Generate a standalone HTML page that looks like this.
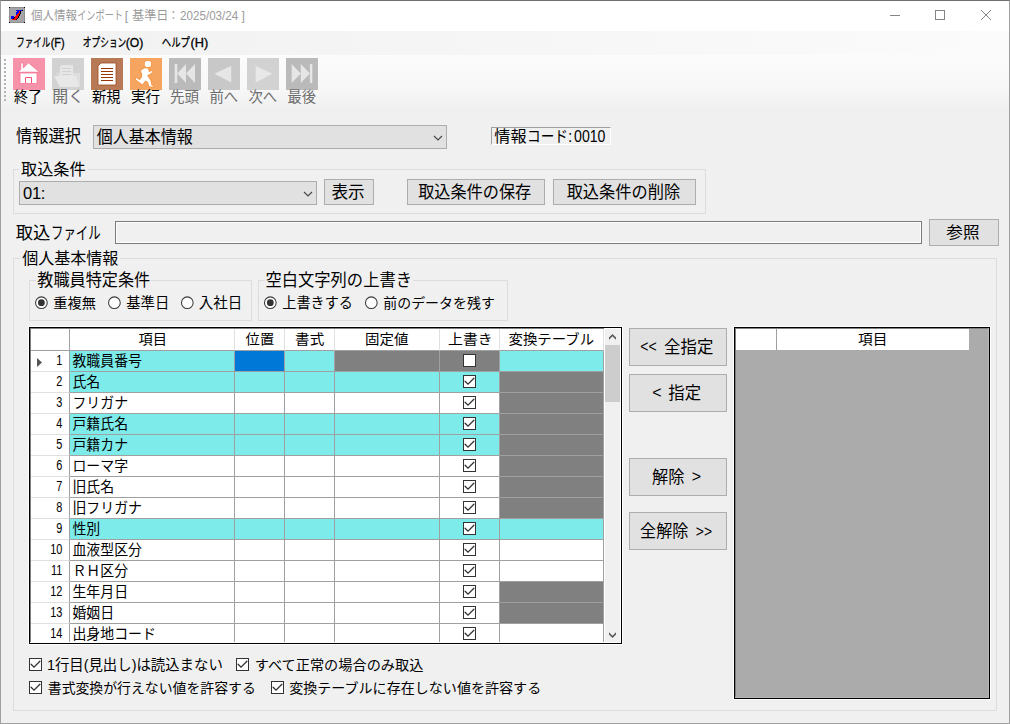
<!DOCTYPE html>
<html lang="ja"><head><meta charset="utf-8"><title>個人情報インポート</title>
<style>
html,body{margin:0;padding:0;background:#f0f0f0;}
body{width:1010px;height:724px;overflow:hidden;font-family:"Liberation Sans","Noto Sans CJK JP",sans-serif;font-size:14px;color:#000;}
#win{position:relative;width:1010px;height:724px;background:#f0f0f0;overflow:hidden;}
#win div,#win span.t,#win svg.i{position:absolute;box-sizing:border-box;}
.t{display:block;overflow:visible;}
.t svg{position:absolute;left:0;top:0;display:block;overflow:visible;}
.t text{font-family:"Liberation Sans","Noto Sans CJK JP",sans-serif;}
.titlebar{background:#fff;}
.menubar{background:linear-gradient(90deg,#f1f1f1 0%,#f6f6f6 50%,#fbfbfb 100%);}
.toolbar{background:linear-gradient(#fcfcfc 0%,#f8f8f8 60%,#f0f0f0 100%);}
.btn{background:#e1e1e1;border:1px solid #adadad;}
.combo{background:#e1e1e1;border:1px solid #adadad;}
.grp{border:1px solid #dcdcdc;}
.txt{background:#f0f0f0;border:1px solid #7a7a7a;box-shadow:inset 0 0 0 1px #fff;}
.sunk{border:1px solid;border-color:#a0a0a0 #fff #fff #a0a0a0;}
.grid{background:#fff;border:1px solid #000;overflow:hidden;}
.cell{border-right:1px solid #a0a0a0;border-bottom:1px solid #a0a0a0;}
.cy{background:#7eebeb;}.gy{background:#808080;}.wh{background:#fff;}.bl{background:#0078d7;}
.hd{background:#fff;border-right:1px solid #e0e0e0;border-bottom:1px solid #a0a0a0;}
.rh{background:#fff;border-right:1px solid #a0a0a0;border-bottom:1px solid #e0e0e0;}
.num{text-align:right;font-size:14px;line-height:20px;transform:scaleX(.78);transform-origin:100% 50%;}
.cb{background:#fff;border:1px solid #333;}
.rad{background:#fff;border:1px solid #333;border-radius:50%;}
.dot{background:#222;border-radius:50%;}
</style></head>
<body>
<div id="win">
<section class="chrome" aria-label="window title and menu">
<div class="titlebar" style="left:1px;top:1px;width:1008px;height:30px;"></div>
<div class="menubar" style="left:1px;top:31px;width:1008px;height:24px;"></div>
<div class="toolbar" style="left:1px;top:55px;width:1008px;height:53px;"></div>
<svg class="i" style="left:9px;top:7px" width="16" height="16" viewBox="0 0 16 16" shape-rendering="crispEdges"><rect width="16" height="16" fill="#8e8e8e"/><rect x="1" y="1" width="14" height="14" fill="#a4a4a8"/><path d="M0 0h1v1h-1zM15 0h1v1h-1zM0 15h1v1h-1zM15 15h1v1h-1z" fill="#000"/><rect x="7" y="3" width="6" height="1" fill="#0000ff"/><rect x="13" y="3" width="1" height="1" fill="#000"/><rect x="8" y="4" width="2" height="1" fill="#0000ff"/><rect x="10" y="4" width="1" height="1" fill="#ff0000"/><rect x="11" y="4" width="1" height="1" fill="#000"/><rect x="7" y="5" width="3" height="1" fill="#0000ff"/><rect x="10" y="5" width="1" height="1" fill="#ff0000"/><rect x="11" y="5" width="1" height="1" fill="#000"/><rect x="7" y="6" width="2" height="1" fill="#0000ff"/><rect x="9" y="6" width="2" height="1" fill="#ff0000"/><rect x="11" y="6" width="1" height="1" fill="#000"/><rect x="7" y="7" width="1" height="1" fill="#0000ff"/><rect x="8" y="7" width="2" height="1" fill="#ff0000"/><rect x="10" y="7" width="1" height="1" fill="#000"/><rect x="7" y="8" width="3" height="1" fill="#ff0000"/><rect x="10" y="8" width="1" height="1" fill="#000"/><rect x="2" y="9" width="3" height="1" fill="#0000ff"/><rect x="6" y="9" width="3" height="1" fill="#ff0000"/><rect x="9" y="9" width="1" height="1" fill="#000"/><rect x="2" y="10" width="3" height="1" fill="#0000ff"/><rect x="5" y="10" width="1" height="1" fill="#000"/><rect x="6" y="10" width="3" height="1" fill="#ff0000"/><rect x="9" y="10" width="1" height="1" fill="#000"/><rect x="2" y="11" width="2" height="1" fill="#0000ff"/><rect x="4" y="11" width="1" height="1" fill="#000"/><rect x="5" y="11" width="3" height="1" fill="#ff0000"/><rect x="8" y="11" width="1" height="1" fill="#000"/><rect x="3" y="12" width="4" height="1" fill="#ff0000"/><rect x="7" y="12" width="1" height="1" fill="#000"/></svg>
<span class="t" style="left:29px;top:8px;width:50px;height:16px"><svg width="50" height="16"><text x="2" y="12.2" font-size="12.15" fill="#9a9a9a" textLength="46" lengthAdjust="spacingAndGlyphs">個人情報</text></svg></span>
<span class="t" style="left:76px;top:7px;width:48px;height:16px"><svg width="48" height="16"><text x="1.21" y="13.2" font-size="12.15" fill="#9a9a9a" textLength="45.8" lengthAdjust="spacingAndGlyphs">インポート</text></svg></span>
<span class="t" style="left:123px;top:8px;width:8px;height:17px"><svg width="8" height="17"><text x="1.72" y="12.2" font-size="12.15" fill="#9a9a9a">[</text></svg></span>
<span class="t" style="left:130px;top:7px;width:39px;height:17px"><svg width="39" height="17"><text x="2.06" y="13.2" font-size="12.15" fill="#9a9a9a" textLength="36.4" lengthAdjust="spacingAndGlyphs">基準日</text></svg></span>
<span class="t" style="left:170px;top:9px;width:7px;height:13px"><svg width="7" height="13"><text x="-2.14" y="11.2" font-size="12.15" fill="#9a9a9a" textLength="11.2" lengthAdjust="spacingAndGlyphs">：</text></svg></span>
<span class="t" style="left:178px;top:8px;width:62px;height:17px"><svg width="62" height="17"><text x="2.05" y="12.2" font-size="12.15" fill="#9a9a9a" textLength="58.2" lengthAdjust="spacingAndGlyphs">2025/03/24</text></svg></span>
<span class="t" style="left:239px;top:8px;width:8px;height:17px"><svg width="8" height="17"><text x="2.42" y="12.2" font-size="12.15" fill="#9a9a9a">]</text></svg></span>
<svg class="i" style="left:880px;top:1px" width="128" height="30" viewBox="880 1 128 30" fill="none" stroke="#858585" stroke-width="1"><path d="M890 15.5h10"/><rect x="935.5" y="10.5" width="9" height="9"/><path d="M981 10l10 10M991 10l-10 10"/></svg>
<span class="t" style="left:15px;top:35px;width:37px;height:15px"><svg width="37" height="15"><text x="1.27" y="11.96" font-size="11.95" fill="#000" stroke="#000" stroke-width="0.3" textLength="34" lengthAdjust="spacingAndGlyphs">ファイル</text></svg></span>
<span class="t" style="left:49px;top:35px;width:17px;height:17px"><svg width="17" height="17"><text x="1.76" y="11.96" font-size="11.95" fill="#000" stroke="#000" stroke-width="0.3" textLength="13.9" lengthAdjust="spacingAndGlyphs">(F)</text></svg></span>
<span class="t" style="left:81px;top:35px;width:47px;height:15px"><svg width="47" height="15"><text x="1.85" y="11.96" font-size="11.95" fill="#000" stroke="#000" stroke-width="0.3" textLength="43.4" lengthAdjust="spacingAndGlyphs">オプション</text></svg></span>
<span class="t" style="left:124px;top:35px;width:21px;height:17px"><svg width="21" height="17"><text x="1.76" y="11.96" font-size="11.95" fill="#000" stroke="#000" stroke-width="0.3" textLength="17.6" lengthAdjust="spacingAndGlyphs">(O)</text></svg></span>
<span class="t" style="left:160px;top:35px;width:32px;height:15px"><svg width="32" height="15"><text x="1.82" y="11.96" font-size="11.95" fill="#000" stroke="#000" stroke-width="0.3" textLength="28.2" lengthAdjust="spacingAndGlyphs">ヘルプ</text></svg></span>
<span class="t" style="left:189px;top:35px;width:21px;height:17px"><svg width="21" height="17"><text x="1.54" y="11.96" font-size="11.95" fill="#000" stroke="#000" stroke-width="0.3" textLength="17.7" lengthAdjust="spacingAndGlyphs">(H)</text></svg></span>
</section>
<section class="tools" aria-label="toolbar">
<div class="" style="left:4px;top:59px;width:2px;height:2px;background:#b4b4b4"></div>
<div class="" style="left:4px;top:63px;width:2px;height:2px;background:#b4b4b4"></div>
<div class="" style="left:4px;top:67px;width:2px;height:2px;background:#b4b4b4"></div>
<div class="" style="left:4px;top:71px;width:2px;height:2px;background:#b4b4b4"></div>
<div class="" style="left:4px;top:75px;width:2px;height:2px;background:#b4b4b4"></div>
<div class="" style="left:4px;top:79px;width:2px;height:2px;background:#b4b4b4"></div>
<div class="" style="left:4px;top:83px;width:2px;height:2px;background:#b4b4b4"></div>
<div class="" style="left:4px;top:87px;width:2px;height:2px;background:#b4b4b4"></div>
<div class="" style="left:4px;top:91px;width:2px;height:2px;background:#b4b4b4"></div>
<div class="" style="left:4px;top:95px;width:2px;height:2px;background:#b4b4b4"></div>
<div class="" style="left:4px;top:99px;width:2px;height:2px;background:#b4b4b4"></div>
<svg class="i" style="left:13px;top:58px" width="32" height="32" viewBox="0 0 32 32"><rect width="32" height="32" fill="#f792ab"/><g fill="#fff" stroke="#f4668a" stroke-width=".7"><path d="M7.7 4.8h2.6v5.2l5.2-5.2 11 9.4h-21.8l3-2.6z"/><path d="M7 15h17v10.5h-17z"/><path d="M12.5 25v-5.5h6v5.5" fill="#fff" stroke="#f4507a" stroke-width="1"/></g></svg>
<svg class="i" style="left:52px;top:58px" width="32" height="32" viewBox="0 0 32 32"><rect width="32" height="32" fill="#d2d2d2"/><path d="M5 15h23v13h-20z" fill="#dedede"/><path d="M8 9l2-2h11v13h-13z" fill="#e6e6e6"/><path d="M10 10.5h9M10 13.5h9M10 16.5h9" stroke="#d2d2d2" stroke-width="1"/><path d="M2 18h22l3.3 11h-19.3z" fill="#e8e8e8"/></svg>
<svg class="i" style="left:91px;top:58px" width="32" height="32" viewBox="0 0 32 32"><rect width="32" height="32" fill="#b87a56"/><path d="M7 8l3-3h15v22h-18z" fill="#fff" stroke="#a04a1e" stroke-width=".8"/><path d="M10 10.5h12M10 13.5h12M10 16.5h12M10 19.5h12M10 22.5h12" stroke="#9a3306" stroke-width="1"/></svg>
<svg class="i" style="left:130px;top:58px" width="32" height="32" viewBox="0 0 32 32"><rect width="32" height="32" fill="#f5a55f"/><g fill="#fff" stroke="#f3913c" stroke-width="1.4" paint-order="stroke" stroke-linejoin="round"><circle cx="17.9" cy="6" r="3.3"/><path d="M14.4 10.2L17.9 10.4 18.9 13.9 21.9 12.9 22.4 13.9 19.9 15.9 17.1 17.6 20.6 22.4 21.4 27.3 22.9 28.1 22.9 29.1 19.4 28.3 17.9 23.9 15.4 22.4 12.4 26.6 5.7 21.4 6.2 20.1 9.7 22.1 11.7 19.9 12.2 15.2 11.2 14.4 11.2 12.2z"/></g></svg>
<svg class="i" style="left:169px;top:58px" width="32" height="32" viewBox="0 0 32 32"><rect width="32" height="32" fill="#bababa"/><path d="M5.7 6h2.6v19h-2.6zM8.3 15.5L17 6v19zM17 15.5L26 6v19z" fill="#e6e6e6"/></svg>
<svg class="i" style="left:208px;top:58px" width="32" height="32" viewBox="0 0 32 32"><rect width="32" height="32" fill="#c8c8c8"/><path d="M6.5 15.8L23.2 7.7v16.8z" fill="#e6e6e6"/></svg>
<svg class="i" style="left:247px;top:58px" width="32" height="32" viewBox="0 0 32 32"><rect width="32" height="32" fill="#d2d2d2"/><path d="M25.3 15.8L8.7 7.7v16.8z" fill="#e8e8e8"/></svg>
<svg class="i" style="left:286px;top:58px" width="32" height="32" viewBox="0 0 32 32"><rect width="32" height="32" fill="#bababa"/><path d="M23.9 6h2.4v19h-2.4zM23.9 15.5L14.8 6v19zM14.8 15.5L5.7 6v19z" fill="#e6e6e6"/></svg>
<span class="t" style="left:12px;top:87px;width:30px;height:19px"><svg width="30" height="19"><text x="2.09" y="15.07" font-size="14.7" fill="#000" textLength="27.9" lengthAdjust="spacingAndGlyphs">終了</text></svg></span>
<span class="t" style="left:51px;top:87px;width:29px;height:19px"><svg width="29" height="19"><text x="1.39" y="15.01" font-size="15.6" fill="#6e6e6e" textLength="31.8" lengthAdjust="spacingAndGlyphs">開く</text></svg></span>
<span class="t" style="left:90px;top:87px;width:33px;height:19px"><svg width="33" height="19"><text x="2" y="14.83" font-size="14.5" fill="#000" textLength="28.7" lengthAdjust="spacingAndGlyphs">新規</text></svg></span>
<span class="t" style="left:129px;top:87px;width:33px;height:19px"><svg width="33" height="19"><text x="2.02" y="15.02" font-size="14.7" fill="#000" textLength="29.2" lengthAdjust="spacingAndGlyphs">実行</text></svg></span>
<span class="t" style="left:168px;top:87px;width:33px;height:19px"><svg width="33" height="19"><text x="1.9" y="14.99" font-size="14.7" fill="#6e6e6e" textLength="29.1" lengthAdjust="spacingAndGlyphs">先頭</text></svg></span>
<span class="t" style="left:208px;top:87px;width:32px;height:19px"><svg width="32" height="19"><text x="1.49" y="15.07" font-size="14.8" fill="#6e6e6e" textLength="28.7" lengthAdjust="spacingAndGlyphs">前へ</text></svg></span>
<span class="t" style="left:247px;top:87px;width:32px;height:19px"><svg width="32" height="19"><text x="1.47" y="14.96" font-size="15" fill="#6e6e6e" textLength="28.8" lengthAdjust="spacingAndGlyphs">次へ</text></svg></span>
<span class="t" style="left:286px;top:87px;width:31px;height:19px"><svg width="31" height="19"><text x="1.45" y="14.83" font-size="15.2" fill="#6e6e6e" textLength="28.4" lengthAdjust="spacingAndGlyphs">最後</text></svg></span>
</section>
<section class="form-top" aria-label="import settings">
<span class="t" style="left:14px;top:125px;width:69px;height:21px"><svg width="69" height="21"><text x="1.98" y="16.87" font-size="17.2" fill="#000" textLength="65" lengthAdjust="spacingAndGlyphs">情報選択</text></svg></span>
<div class="combo" style="left:93px;top:125px;width:354px;height:24px;"></div>
<span class="t" style="left:95px;top:126px;width:100px;height:21px"><svg width="100" height="21"><text x="1.83" y="16.79" font-size="16.9" fill="#000" textLength="95.8" lengthAdjust="spacingAndGlyphs">個人基本情報</text></svg></span>
<svg class="i" style="left:432px;top:134px" width="12" height="8" viewBox="0 0 12 8"><path d="M2 2l4 4 4-4" fill="none" stroke="#444" stroke-width="1.1"/></svg>
<div class="sunk" style="left:491px;top:127px;width:120px;height:18px;"></div>
<span class="t" style="left:493px;top:126px;width:36px;height:20px"><svg width="36" height="20"><text x="1.38" y="15.79" font-size="15.6" fill="#000" textLength="32.3" lengthAdjust="spacingAndGlyphs">情報</text></svg></span>
<span class="t" style="left:526px;top:127px;width:43px;height:18px"><svg width="43" height="18"><text x="1.05" y="14.79" font-size="15.6" fill="#000" textLength="41" lengthAdjust="spacingAndGlyphs">コード</text></svg></span>
<span class="t" style="left:567px;top:131px;width:7px;height:13px"><svg width="7" height="13"><text x="1.09" y="10.79" font-size="15.6" fill="#000">:</text></svg></span>
<span class="t" style="left:572px;top:128px;width:35px;height:16px"><svg width="35" height="16"><text x="2.04" y="13.79" font-size="15.6" fill="#000" textLength="31.4" lengthAdjust="spacingAndGlyphs">0010</text></svg></span>
<div class="grp" style="left:13px;top:169px;width:693px;height:45px;"></div>
<div class="" style="left:19px;top:160px;width:69px;height:18px;background:#f0f0f0"></div>
<span class="t" style="left:19px;top:159px;width:68px;height:20px"><svg width="68" height="20"><text x="2.06" y="15.82" font-size="16.2" fill="#000" textLength="64.6" lengthAdjust="spacingAndGlyphs">取込条件</text></svg></span>
<div class="combo" style="left:19px;top:181px;width:298px;height:24px;"><span style="position:absolute;left:3px;top:2px;font-size:16.5px;line-height:19px;letter-spacing:-.3px">01:</span></div>
<svg class="i" style="left:302px;top:190px" width="12" height="8" viewBox="0 0 12 8"><path d="M2 2l4 4 4-4" fill="none" stroke="#444" stroke-width="1.1"/></svg>
<div class="btn" style="left:324px;top:179px;width:50px;height:26px;"></div>
<span class="t" style="left:330px;top:181px;width:36px;height:21px"><svg width="36" height="21"><text x="1.43" y="17.01" font-size="17.1" fill="#000" textLength="33.3" lengthAdjust="spacingAndGlyphs">表示</text></svg></span>
<div class="btn" style="left:407px;top:179px;width:138px;height:26px;"></div>
<span class="t" style="left:417px;top:181px;width:116px;height:21px"><svg width="116" height="21"><text x="1.15" y="16.86" font-size="16.9" fill="#000" textLength="113.1" lengthAdjust="spacingAndGlyphs">取込条件の保存</text></svg></span>
<div class="btn" style="left:553px;top:179px;width:143px;height:26px;"></div>
<span class="t" style="left:565px;top:181px;width:117px;height:21px"><svg width="117" height="21"><text x="1.65" y="16.86" font-size="16.9" fill="#000" textLength="113.5" lengthAdjust="spacingAndGlyphs">取込条件の削除</text></svg></span>
<span class="t" style="left:14px;top:223px;width:38px;height:20px"><svg width="38" height="20"><text x="1.79" y="16.24" font-size="17.2" fill="#000" textLength="34.7" lengthAdjust="spacingAndGlyphs">取込</text></svg></span>
<span class="t" style="left:50px;top:224px;width:53px;height:18px"><svg width="53" height="18"><text x="0.97" y="15.24" font-size="17.2" fill="#000" textLength="49.8" lengthAdjust="spacingAndGlyphs">ファイル</text></svg></span>
<div class="txt" style="left:115px;top:221px;width:807px;height:23px;"></div>
<div class="btn" style="left:929px;top:219px;width:70px;height:27px;"></div>
<span class="t" style="left:945px;top:222px;width:36px;height:20px"><svg width="36" height="20"><text x="1.32" y="15.83" font-size="16" fill="#000" textLength="33.2" lengthAdjust="spacingAndGlyphs">参照</text></svg></span>
</section>
<section class="options" aria-label="group options">
<div class="grp" style="left:13px;top:258px;width:984px;height:453px;"></div>
<div class="" style="left:20px;top:249px;width:100px;height:18px;background:#f0f0f0"></div>
<span class="t" style="left:20px;top:248px;width:100px;height:20px"><svg width="100" height="20"><text x="2.13" y="16.33" font-size="16.4" fill="#000" textLength="96.2" lengthAdjust="spacingAndGlyphs">個人基本情報</text></svg></span>
<div class="grp" style="left:29px;top:280px;width:223px;height:41px;"></div>
<div class="" style="left:36px;top:271px;width:115px;height:18px;background:#f0f0f0"></div>
<span class="t" style="left:35px;top:270px;width:117px;height:20px"><svg width="117" height="20"><text x="2.26" y="16.16" font-size="17" fill="#000" textLength="112.9" lengthAdjust="spacingAndGlyphs">教職員特定条件</text></svg></span>
<div class="grp" style="left:258px;top:280px;width:250px;height:41px;"></div>
<div class="" style="left:265px;top:271px;width:148px;height:18px;background:#f0f0f0"></div>
<span class="t" style="left:264px;top:270px;width:149px;height:20px"><svg width="149" height="20"><text x="1.54" y="16.17" font-size="17.1" fill="#000" textLength="146.4" lengthAdjust="spacingAndGlyphs">空白文字列の上書き</text></svg></span>
<svg class="i" style="left:34px;top:295px" width="15" height="15" viewBox="0 0 15 15"><circle cx="7.4" cy="7.7" r="5.85" fill="#fff" stroke="#3a3a3a" stroke-width="1.05"/><circle cx="7.4" cy="7.7" r="3.4" fill="#333"/></svg>
<span class="t" style="left:52px;top:294px;width:46px;height:18px"><svg width="46" height="18"><text x="1.35" y="14.05" font-size="14.2" fill="#000" textLength="42.6" lengthAdjust="spacingAndGlyphs">重複無</text></svg></span>
<svg class="i" style="left:107px;top:295px" width="15" height="15" viewBox="0 0 15 15"><circle cx="7.4" cy="7.7" r="5.85" fill="#fff" stroke="#3a3a3a" stroke-width="1.05"/></svg>
<span class="t" style="left:124px;top:294px;width:45px;height:18px"><svg width="45" height="18"><text x="2.22" y="14.2" font-size="14.3" fill="#000" textLength="43" lengthAdjust="spacingAndGlyphs">基準日</text></svg></span>
<svg class="i" style="left:180px;top:295px" width="15" height="15" viewBox="0 0 15 15"><circle cx="7.3" cy="7.7" r="5.85" fill="#fff" stroke="#3a3a3a" stroke-width="1.05"/></svg>
<span class="t" style="left:197px;top:294px;width:45px;height:18px"><svg width="45" height="18"><text x="1.78" y="14.19" font-size="14.5" fill="#000" textLength="43.5" lengthAdjust="spacingAndGlyphs">入社日</text></svg></span>
<svg class="i" style="left:263px;top:295px" width="15" height="15" viewBox="0 0 15 15"><circle cx="7.3" cy="7.7" r="5.85" fill="#fff" stroke="#3a3a3a" stroke-width="1.05"/><circle cx="7.3" cy="7.7" r="3.4" fill="#333"/></svg>
<span class="t" style="left:281px;top:294px;width:73px;height:18px"><svg width="73" height="18"><text x="1.36" y="14.14" font-size="14.3" fill="#000" textLength="70.5" lengthAdjust="spacingAndGlyphs">上書きする</text></svg></span>
<svg class="i" style="left:364px;top:295px" width="15" height="15" viewBox="0 0 15 15"><circle cx="7.3" cy="7.7" r="5.85" fill="#fff" stroke="#3a3a3a" stroke-width="1.05"/></svg>
<span class="t" style="left:382px;top:294px;width:115px;height:18px"><svg width="115" height="18"><text x="1.25" y="14.06" font-size="14" fill="#000" textLength="111.6" lengthAdjust="spacingAndGlyphs">前のデータを残す</text></svg></span>
</section>
<section class="grid-left" aria-label="item grid">
<div class="" style="left:28px;top:326px;width:595px;height:319px;border:1px solid #fff"></div>
<div class="grid" style="left:29px;top:327px;width:593px;height:317px;"></div>
<div class="hd" style="left:31px;top:329px;width:39px;height:22px;border-right-color:#a0a0a0"></div>
<div class="hd" style="left:70px;top:329px;width:165px;height:22px;"></div>
<div class="hd" style="left:235px;top:329px;width:50px;height:22px;"></div>
<div class="hd" style="left:285px;top:329px;width:50px;height:22px;"></div>
<div class="hd" style="left:335px;top:329px;width:105px;height:22px;"></div>
<div class="hd" style="left:440px;top:329px;width:60px;height:22px;"></div>
<div class="hd" style="left:500px;top:329px;width:104px;height:22px;"></div>
<span class="t" style="left:137px;top:330px;width:30px;height:17px"><svg width="30" height="17"><text x="1.64" y="13.66" font-size="14" fill="#000" textLength="28.5" lengthAdjust="spacingAndGlyphs">項目</text></svg></span>
<span class="t" style="left:244px;top:330px;width:32px;height:17px"><svg width="32" height="17"><text x="1.64" y="13.66" font-size="14" fill="#000" textLength="28.6" lengthAdjust="spacingAndGlyphs">位置</text></svg></span>
<span class="t" style="left:293px;top:330px;width:33px;height:17px"><svg width="33" height="17"><text x="2.08" y="13.66" font-size="14" fill="#000" textLength="29.1" lengthAdjust="spacingAndGlyphs">書式</text></svg></span>
<span class="t" style="left:364px;top:330px;width:46px;height:17px"><svg width="46" height="17"><text x="1.08" y="13.66" font-size="14" fill="#000" textLength="43.4" lengthAdjust="spacingAndGlyphs">固定値</text></svg></span>
<span class="t" style="left:447px;top:330px;width:46px;height:17px"><svg width="46" height="17"><text x="1.09" y="13.66" font-size="14" fill="#000" textLength="44.6" lengthAdjust="spacingAndGlyphs">上書き</text></svg></span>
<span class="t" style="left:507px;top:329px;width:89px;height:18px"><svg width="89" height="18"><text x="1.54" y="14.66" font-size="14" fill="#000" textLength="85.6" lengthAdjust="spacingAndGlyphs">変換テーブル</text></svg></span>
<div class="rh" style="left:31px;top:351px;width:39px;height:21px;"><div class="num" style="left:0;top:-1px;width:31.3px;height:20px">1</div></div>
<div class="cell cy" style="left:70px;top:351px;width:165px;height:21px;"></div>
<div class="cell bl" style="left:235px;top:351px;width:50px;height:21px;"></div>
<div class="cell cy" style="left:285px;top:351px;width:50px;height:21px;"></div>
<div class="cell gy" style="left:335px;top:351px;width:105px;height:21px;"></div>
<div class="cell gy" style="left:440px;top:351px;width:60px;height:21px;"></div>
<div class="cell cy" style="left:500px;top:351px;width:104px;height:21px;"></div>
<span class="t" style="left:70px;top:351px;width:74px;height:18px"><svg width="74" height="18"><text x="2.44" y="14.77" font-size="14.4" fill="#000" textLength="69.6" lengthAdjust="spacingAndGlyphs">教職員番号</text></svg></span>
<div class="cb" style="left:463px;top:354px;width:13px;height:13px;"></div>
<div class="rh" style="left:31px;top:372px;width:39px;height:21px;"><div class="num" style="left:0;top:-1px;width:31.3px;height:20px">2</div></div>
<div class="cell cy" style="left:70px;top:372px;width:165px;height:21px;"></div>
<div class="cell cy" style="left:235px;top:372px;width:50px;height:21px;"></div>
<div class="cell cy" style="left:285px;top:372px;width:50px;height:21px;"></div>
<div class="cell cy" style="left:335px;top:372px;width:105px;height:21px;"></div>
<div class="cell cy" style="left:440px;top:372px;width:60px;height:21px;"></div>
<div class="cell gy" style="left:500px;top:372px;width:104px;height:21px;"></div>
<span class="t" style="left:71px;top:372px;width:30px;height:18px"><svg width="30" height="18"><text x="1.44" y="14.77" font-size="14.4" fill="#000" textLength="27.8" lengthAdjust="spacingAndGlyphs">氏名</text></svg></span>
<div class="cb" style="left:463px;top:375px;width:13px;height:13px;"><svg width="11" height="11" viewBox="0 0 11 11" style="position:absolute;left:0;top:0"><path d="M1.1 5.3L4 8.2 9.9 2.3" fill="none" stroke="#333" stroke-width="1.3" stroke-linecap="round"/></svg></div>
<div class="rh" style="left:31px;top:393px;width:39px;height:21px;"><div class="num" style="left:0;top:-1px;width:31.3px;height:20px">3</div></div>
<div class="cell wh" style="left:70px;top:393px;width:165px;height:21px;"></div>
<div class="cell wh" style="left:235px;top:393px;width:50px;height:21px;"></div>
<div class="cell wh" style="left:285px;top:393px;width:50px;height:21px;"></div>
<div class="cell wh" style="left:335px;top:393px;width:105px;height:21px;"></div>
<div class="cell wh" style="left:440px;top:393px;width:60px;height:21px;"></div>
<div class="cell gy" style="left:500px;top:393px;width:104px;height:21px;"></div>
<span class="t" style="left:72px;top:393px;width:57px;height:18px"><svg width="57" height="18"><text x="0.44" y="14.77" font-size="14.4" fill="#000" textLength="55.6" lengthAdjust="spacingAndGlyphs">フリガナ</text></svg></span>
<div class="cb" style="left:463px;top:396px;width:13px;height:13px;"><svg width="11" height="11" viewBox="0 0 11 11" style="position:absolute;left:0;top:0"><path d="M1.1 5.3L4 8.2 9.9 2.3" fill="none" stroke="#333" stroke-width="1.3" stroke-linecap="round"/></svg></div>
<div class="rh" style="left:31px;top:414px;width:39px;height:21px;"><div class="num" style="left:0;top:-1px;width:31.3px;height:20px">4</div></div>
<div class="cell cy" style="left:70px;top:414px;width:165px;height:21px;"></div>
<div class="cell cy" style="left:235px;top:414px;width:50px;height:21px;"></div>
<div class="cell cy" style="left:285px;top:414px;width:50px;height:21px;"></div>
<div class="cell cy" style="left:335px;top:414px;width:105px;height:21px;"></div>
<div class="cell cy" style="left:440px;top:414px;width:60px;height:21px;"></div>
<div class="cell gy" style="left:500px;top:414px;width:104px;height:21px;"></div>
<span class="t" style="left:71px;top:414px;width:58px;height:18px"><svg width="58" height="18"><text x="1.44" y="14.77" font-size="14.4" fill="#000" textLength="55.6" lengthAdjust="spacingAndGlyphs">戸籍氏名</text></svg></span>
<div class="cb" style="left:463px;top:417px;width:13px;height:13px;"><svg width="11" height="11" viewBox="0 0 11 11" style="position:absolute;left:0;top:0"><path d="M1.1 5.3L4 8.2 9.9 2.3" fill="none" stroke="#333" stroke-width="1.3" stroke-linecap="round"/></svg></div>
<div class="rh" style="left:31px;top:435px;width:39px;height:21px;"><div class="num" style="left:0;top:-1px;width:31.3px;height:20px">5</div></div>
<div class="cell cy" style="left:70px;top:435px;width:165px;height:21px;"></div>
<div class="cell cy" style="left:235px;top:435px;width:50px;height:21px;"></div>
<div class="cell cy" style="left:285px;top:435px;width:50px;height:21px;"></div>
<div class="cell cy" style="left:335px;top:435px;width:105px;height:21px;"></div>
<div class="cell cy" style="left:440px;top:435px;width:60px;height:21px;"></div>
<div class="cell gy" style="left:500px;top:435px;width:104px;height:21px;"></div>
<span class="t" style="left:71px;top:435px;width:58px;height:18px"><svg width="58" height="18"><text x="1.44" y="14.77" font-size="14.4" fill="#000" textLength="55.6" lengthAdjust="spacingAndGlyphs">戸籍カナ</text></svg></span>
<div class="cb" style="left:463px;top:438px;width:13px;height:13px;"><svg width="11" height="11" viewBox="0 0 11 11" style="position:absolute;left:0;top:0"><path d="M1.1 5.3L4 8.2 9.9 2.3" fill="none" stroke="#333" stroke-width="1.3" stroke-linecap="round"/></svg></div>
<div class="rh" style="left:31px;top:456px;width:39px;height:21px;"><div class="num" style="left:0;top:-1px;width:31.3px;height:20px">6</div></div>
<div class="cell wh" style="left:70px;top:456px;width:165px;height:21px;"></div>
<div class="cell wh" style="left:235px;top:456px;width:50px;height:21px;"></div>
<div class="cell wh" style="left:285px;top:456px;width:50px;height:21px;"></div>
<div class="cell wh" style="left:335px;top:456px;width:105px;height:21px;"></div>
<div class="cell wh" style="left:440px;top:456px;width:60px;height:21px;"></div>
<div class="cell gy" style="left:500px;top:456px;width:104px;height:21px;"></div>
<span class="t" style="left:72px;top:456px;width:58px;height:18px"><svg width="58" height="18"><text x="0.44" y="14.77" font-size="14.4" fill="#000" textLength="55.6" lengthAdjust="spacingAndGlyphs">ローマ字</text></svg></span>
<div class="cb" style="left:463px;top:459px;width:13px;height:13px;"><svg width="11" height="11" viewBox="0 0 11 11" style="position:absolute;left:0;top:0"><path d="M1.1 5.3L4 8.2 9.9 2.3" fill="none" stroke="#333" stroke-width="1.3" stroke-linecap="round"/></svg></div>
<div class="rh" style="left:31px;top:477px;width:39px;height:21px;"><div class="num" style="left:0;top:-1px;width:31.3px;height:20px">7</div></div>
<div class="cell wh" style="left:70px;top:477px;width:165px;height:21px;"></div>
<div class="cell wh" style="left:235px;top:477px;width:50px;height:21px;"></div>
<div class="cell wh" style="left:285px;top:477px;width:50px;height:21px;"></div>
<div class="cell wh" style="left:335px;top:477px;width:105px;height:21px;"></div>
<div class="cell wh" style="left:440px;top:477px;width:60px;height:21px;"></div>
<div class="cell gy" style="left:500px;top:477px;width:104px;height:21px;"></div>
<span class="t" style="left:72px;top:477px;width:43px;height:18px"><svg width="43" height="18"><text x="0.44" y="14.77" font-size="14.4" fill="#000" textLength="41.7" lengthAdjust="spacingAndGlyphs">旧氏名</text></svg></span>
<div class="cb" style="left:463px;top:480px;width:13px;height:13px;"><svg width="11" height="11" viewBox="0 0 11 11" style="position:absolute;left:0;top:0"><path d="M1.1 5.3L4 8.2 9.9 2.3" fill="none" stroke="#333" stroke-width="1.3" stroke-linecap="round"/></svg></div>
<div class="rh" style="left:31px;top:498px;width:39px;height:21px;"><div class="num" style="left:0;top:-1px;width:31.3px;height:20px">8</div></div>
<div class="cell wh" style="left:70px;top:498px;width:165px;height:21px;"></div>
<div class="cell wh" style="left:235px;top:498px;width:50px;height:21px;"></div>
<div class="cell wh" style="left:285px;top:498px;width:50px;height:21px;"></div>
<div class="cell wh" style="left:335px;top:498px;width:105px;height:21px;"></div>
<div class="cell wh" style="left:440px;top:498px;width:60px;height:21px;"></div>
<div class="cell gy" style="left:500px;top:498px;width:104px;height:21px;"></div>
<span class="t" style="left:72px;top:498px;width:71px;height:18px"><svg width="71" height="18"><text x="0.44" y="14.77" font-size="14.4" fill="#000" textLength="69.6" lengthAdjust="spacingAndGlyphs">旧フリガナ</text></svg></span>
<div class="cb" style="left:463px;top:501px;width:13px;height:13px;"><svg width="11" height="11" viewBox="0 0 11 11" style="position:absolute;left:0;top:0"><path d="M1.1 5.3L4 8.2 9.9 2.3" fill="none" stroke="#333" stroke-width="1.3" stroke-linecap="round"/></svg></div>
<div class="rh" style="left:31px;top:519px;width:39px;height:21px;"><div class="num" style="left:0;top:-1px;width:31.3px;height:20px">9</div></div>
<div class="cell cy" style="left:70px;top:519px;width:165px;height:21px;"></div>
<div class="cell cy" style="left:235px;top:519px;width:50px;height:21px;"></div>
<div class="cell cy" style="left:285px;top:519px;width:50px;height:21px;"></div>
<div class="cell cy" style="left:335px;top:519px;width:105px;height:21px;"></div>
<div class="cell cy" style="left:440px;top:519px;width:60px;height:21px;"></div>
<div class="cell cy" style="left:500px;top:519px;width:104px;height:21px;"></div>
<span class="t" style="left:71px;top:519px;width:30px;height:18px"><svg width="30" height="18"><text x="1.44" y="14.77" font-size="14.4" fill="#000" textLength="27.8" lengthAdjust="spacingAndGlyphs">性別</text></svg></span>
<div class="cb" style="left:463px;top:522px;width:13px;height:13px;"><svg width="11" height="11" viewBox="0 0 11 11" style="position:absolute;left:0;top:0"><path d="M1.1 5.3L4 8.2 9.9 2.3" fill="none" stroke="#333" stroke-width="1.3" stroke-linecap="round"/></svg></div>
<div class="rh" style="left:31px;top:540px;width:39px;height:21px;"><div class="num" style="left:0;top:-1px;width:31.3px;height:20px">10</div></div>
<div class="cell wh" style="left:70px;top:540px;width:165px;height:21px;"></div>
<div class="cell wh" style="left:235px;top:540px;width:50px;height:21px;"></div>
<div class="cell wh" style="left:285px;top:540px;width:50px;height:21px;"></div>
<div class="cell wh" style="left:335px;top:540px;width:105px;height:21px;"></div>
<div class="cell wh" style="left:440px;top:540px;width:60px;height:21px;"></div>
<div class="cell wh" style="left:500px;top:540px;width:104px;height:21px;"></div>
<span class="t" style="left:70px;top:540px;width:74px;height:18px"><svg width="74" height="18"><text x="2.44" y="14.77" font-size="14.4" fill="#000" textLength="69.6" lengthAdjust="spacingAndGlyphs">血液型区分</text></svg></span>
<div class="cb" style="left:463px;top:543px;width:13px;height:13px;"><svg width="11" height="11" viewBox="0 0 11 11" style="position:absolute;left:0;top:0"><path d="M1.1 5.3L4 8.2 9.9 2.3" fill="none" stroke="#333" stroke-width="1.3" stroke-linecap="round"/></svg></div>
<div class="rh" style="left:31px;top:561px;width:39px;height:21px;"><div class="num" style="left:0;top:-1px;width:31.3px;height:20px">11</div></div>
<div class="cell wh" style="left:70px;top:561px;width:165px;height:21px;"></div>
<div class="cell wh" style="left:235px;top:561px;width:50px;height:21px;"></div>
<div class="cell wh" style="left:285px;top:561px;width:50px;height:21px;"></div>
<div class="cell wh" style="left:335px;top:561px;width:105px;height:21px;"></div>
<div class="cell wh" style="left:440px;top:561px;width:60px;height:21px;"></div>
<div class="cell wh" style="left:500px;top:561px;width:104px;height:21px;"></div>
<span class="t" style="left:73px;top:562px;width:57px;height:17px"><svg width="57" height="17"><text x="-0.56" y="13.77" font-size="14.4" fill="#000" textLength="55.6" lengthAdjust="spacingAndGlyphs">ＲＨ区分</text></svg></span>
<div class="cb" style="left:463px;top:564px;width:13px;height:13px;"><svg width="11" height="11" viewBox="0 0 11 11" style="position:absolute;left:0;top:0"><path d="M1.1 5.3L4 8.2 9.9 2.3" fill="none" stroke="#333" stroke-width="1.3" stroke-linecap="round"/></svg></div>
<div class="rh" style="left:31px;top:582px;width:39px;height:21px;"><div class="num" style="left:0;top:-1px;width:31.3px;height:20px">12</div></div>
<div class="cell wh" style="left:70px;top:582px;width:165px;height:21px;"></div>
<div class="cell wh" style="left:235px;top:582px;width:50px;height:21px;"></div>
<div class="cell wh" style="left:285px;top:582px;width:50px;height:21px;"></div>
<div class="cell wh" style="left:335px;top:582px;width:105px;height:21px;"></div>
<div class="cell wh" style="left:440px;top:582px;width:60px;height:21px;"></div>
<div class="cell gy" style="left:500px;top:582px;width:104px;height:21px;"></div>
<span class="t" style="left:71px;top:582px;width:57px;height:18px"><svg width="57" height="18"><text x="1.44" y="14.77" font-size="14.4" fill="#000" textLength="55.6" lengthAdjust="spacingAndGlyphs">生年月日</text></svg></span>
<div class="cb" style="left:463px;top:585px;width:13px;height:13px;"><svg width="11" height="11" viewBox="0 0 11 11" style="position:absolute;left:0;top:0"><path d="M1.1 5.3L4 8.2 9.9 2.3" fill="none" stroke="#333" stroke-width="1.3" stroke-linecap="round"/></svg></div>
<div class="rh" style="left:31px;top:603px;width:39px;height:21px;"><div class="num" style="left:0;top:-1px;width:31.3px;height:20px">13</div></div>
<div class="cell wh" style="left:70px;top:603px;width:165px;height:21px;"></div>
<div class="cell wh" style="left:235px;top:603px;width:50px;height:21px;"></div>
<div class="cell wh" style="left:285px;top:603px;width:50px;height:21px;"></div>
<div class="cell wh" style="left:335px;top:603px;width:105px;height:21px;"></div>
<div class="cell wh" style="left:440px;top:603px;width:60px;height:21px;"></div>
<div class="cell gy" style="left:500px;top:603px;width:104px;height:21px;"></div>
<span class="t" style="left:71px;top:603px;width:43px;height:18px"><svg width="43" height="18"><text x="1.44" y="14.77" font-size="14.4" fill="#000" textLength="41.7" lengthAdjust="spacingAndGlyphs">婚姻日</text></svg></span>
<div class="cb" style="left:463px;top:606px;width:13px;height:13px;"><svg width="11" height="11" viewBox="0 0 11 11" style="position:absolute;left:0;top:0"><path d="M1.1 5.3L4 8.2 9.9 2.3" fill="none" stroke="#333" stroke-width="1.3" stroke-linecap="round"/></svg></div>
<div class="rh" style="left:31px;top:624px;width:39px;height:18px;border-bottom-width:0"><div class="num" style="left:0;top:-1px;width:31.3px;height:20px">14</div></div>
<div class="cell wh" style="left:70px;top:624px;width:165px;height:18px;border-bottom-width:0"></div>
<div class="cell wh" style="left:235px;top:624px;width:50px;height:18px;border-bottom-width:0"></div>
<div class="cell wh" style="left:285px;top:624px;width:50px;height:18px;border-bottom-width:0"></div>
<div class="cell wh" style="left:335px;top:624px;width:105px;height:18px;border-bottom-width:0"></div>
<div class="cell wh" style="left:440px;top:624px;width:60px;height:18px;border-bottom-width:0"></div>
<div class="cell wh" style="left:500px;top:624px;width:104px;height:18px;border-bottom-width:0"></div>
<span class="t" style="left:72px;top:624px;width:85px;height:18px"><svg width="85" height="18"><text x="0.44" y="14.77" font-size="14.4" fill="#000" textLength="83.5" lengthAdjust="spacingAndGlyphs">出身地コード</text></svg></span>
<div class="cb" style="left:463px;top:627px;width:13px;height:13px;"><svg width="11" height="11" viewBox="0 0 11 11" style="position:absolute;left:0;top:0"><path d="M1.1 5.3L4 8.2 9.9 2.3" fill="none" stroke="#333" stroke-width="1.3" stroke-linecap="round"/></svg></div>
<svg class="i" style="left:36px;top:357px" width="7" height="11" viewBox="0 0 7 11"><path d="M1 1l5 4.5-5 4.5z" fill="#555"/></svg>
<div class="" style="left:604px;top:328px;width:17px;height:315px;background:#fff"></div>
<div class="" style="left:605px;top:329px;width:15px;height:313px;background:#f0f0f0"></div>
<div class="" style="left:605px;top:345px;width:15px;height:57px;background:#cdcdcd"></div>
<svg class="i" style="left:604px;top:328px" width="17" height="17" viewBox="0 0 17 17"><path d="M5 11.8V9.6L8.5 6.1 12 9.6V11.8L8.5 8.3z" fill="#555"/></svg>
<svg class="i" style="left:604px;top:625px" width="17" height="17" viewBox="0 0 17 17"><path d="M5 7.2V9.4L8.5 12.9 12 9.4V7.2L8.5 10.7z" fill="#555"/></svg>
<div class="" style="left:30px;top:328px;width:574px;height:1px;background:#808080"></div>
<div class="" style="left:30px;top:328px;width:1px;height:315px;background:#808080"></div>
<div class="" style="left:30px;top:642px;width:574px;height:1px;background:#fff"></div>
</section>
<section class="move-buttons" aria-label="assign buttons">
<div class="btn" style="left:629px;top:328px;width:98px;height:38px;"></div>
<span class="t" style="left:638px;top:339px;width:20px;height:15px"><svg width="20" height="15"><text x="2.23" y="13.3" font-size="16" fill="#000" textLength="16.4" lengthAdjust="spacingAndGlyphs">&lt;&lt;</text></svg></span>
<span class="t" style="left:662px;top:337px;width:53px;height:20px"><svg width="53" height="20"><text x="2.09" y="15.81" font-size="16.6" fill="#000" textLength="49.2" lengthAdjust="spacingAndGlyphs">全指定</text></svg></span>
<div class="btn" style="left:629px;top:374px;width:98px;height:38px;"></div>
<span class="t" style="left:650px;top:385px;width:12px;height:15px"><svg width="12" height="15"><text x="2.14" y="13.2" font-size="16" fill="#000">&lt;</text></svg></span>
<span class="t" style="left:667px;top:383px;width:36px;height:20px"><svg width="36" height="20"><text x="1.36" y="15.81" font-size="16.6" fill="#000" textLength="32.7" lengthAdjust="spacingAndGlyphs">指定</text></svg></span>
<div class="btn" style="left:629px;top:458px;width:98px;height:38px;"></div>
<span class="t" style="left:650px;top:467px;width:36px;height:20px"><svg width="36" height="20"><text x="1.99" y="15.68" font-size="16.5" fill="#000" textLength="32.4" lengthAdjust="spacingAndGlyphs">解除</text></svg></span>
<span class="t" style="left:690px;top:469px;width:12px;height:15px"><svg width="12" height="15"><text x="1.82" y="13.3" font-size="16" fill="#000">&gt;</text></svg></span>
<div class="btn" style="left:629px;top:512px;width:98px;height:38px;"></div>
<span class="t" style="left:638px;top:521px;width:52px;height:20px"><svg width="52" height="20"><text x="2.01" y="15.88" font-size="16.5" fill="#000" textLength="48.4" lengthAdjust="spacingAndGlyphs">全解除</text></svg></span>
<span class="t" style="left:694px;top:523px;width:20px;height:16px"><svg width="20" height="16"><text x="1.86" y="13.6" font-size="16" fill="#000" textLength="16.3" lengthAdjust="spacingAndGlyphs">&gt;&gt;</text></svg></span>
</section>
<section class="grid-right" aria-label="selected items">
<div class="" style="left:733px;top:326px;width:258px;height:374px;border:1px solid #fff"></div>
<div class="" style="left:734px;top:327px;width:256px;height:372px;background:#ababab;border:1px solid #000"></div>
<div class="" style="left:735px;top:328px;width:254px;height:1px;background:#808080"></div>
<div class="" style="left:735px;top:328px;width:1px;height:370px;background:#808080"></div>
<div class="" style="left:735px;top:697px;width:254px;height:1px;background:#b8b8b8"></div>
<div class="" style="left:988px;top:328px;width:1px;height:370px;background:#b8b8b8"></div>
<div class="" style="left:736px;top:329px;width:41px;height:21px;background:#fff;border-right:1px solid #a0a0a0"></div>
<div class="" style="left:777px;top:329px;width:192px;height:21px;background:#fff"></div>
<span class="t" style="left:856px;top:330px;width:31px;height:17px"><svg width="31" height="17"><text x="2.13" y="13.66" font-size="14" fill="#000" textLength="29.4" lengthAdjust="spacingAndGlyphs">項目</text></svg></span>
</section>
<section class="flags" aria-label="import flags">
<div class="cb" style="left:29px;top:658px;width:13px;height:13px;"><svg width="11" height="11" viewBox="0 0 11 11" style="position:absolute;left:0;top:0"><path d="M1.1 5.3L4 8.2 9.9 2.3" fill="none" stroke="#333" stroke-width="1.3" stroke-linecap="round"/></svg></div>
<span class="t" style="left:46px;top:655px;width:178px;height:20px"><svg width="178" height="20"><text x="0.9" y="14.8" font-size="14.4" fill="#000" textLength="175.9" lengthAdjust="spacingAndGlyphs">1行目(見出し)は読込まない</text></svg></span>
<div class="cb" style="left:236px;top:658px;width:13px;height:13px;"><svg width="11" height="11" viewBox="0 0 11 11" style="position:absolute;left:0;top:0"><path d="M1.1 5.3L4 8.2 9.9 2.3" fill="none" stroke="#333" stroke-width="1.3" stroke-linecap="round"/></svg></div>
<span class="t" style="left:253px;top:656px;width:172px;height:17px"><svg width="172" height="17"><text x="1.75" y="13.83" font-size="13.8" fill="#000" textLength="168.6" lengthAdjust="spacingAndGlyphs">すべて正常の場合のみ取込</text></svg></span>
<div class="cb" style="left:29px;top:681px;width:13px;height:13px;"><svg width="11" height="11" viewBox="0 0 11 11" style="position:absolute;left:0;top:0"><path d="M1.1 5.3L4 8.2 9.9 2.3" fill="none" stroke="#333" stroke-width="1.3" stroke-linecap="round"/></svg></div>
<span class="t" style="left:46px;top:679px;width:212px;height:17px"><svg width="212" height="17"><text x="1.77" y="13.66" font-size="13.6" fill="#000" textLength="208" lengthAdjust="spacingAndGlyphs">書式変換が行えない値を許容する</text></svg></span>
<div class="cb" style="left:271px;top:681px;width:13px;height:13px;"><svg width="11" height="11" viewBox="0 0 11 11" style="position:absolute;left:0;top:0"><path d="M1.1 5.3L4 8.2 9.9 2.3" fill="none" stroke="#333" stroke-width="1.3" stroke-linecap="round"/></svg></div>
<span class="t" style="left:288px;top:679px;width:255px;height:17px"><svg width="255" height="17"><text x="1.2" y="13.66" font-size="13.6" fill="#000" textLength="252" lengthAdjust="spacingAndGlyphs">変換テーブルに存在しない値を許容する</text></svg></span>
</section>
<section class="frame">
<div class="" style="left:0px;top:0px;width:1010px;height:724px;border:1px solid #a0a0a0;border-top-color:#707070"></div>
</section>
</div>
</body></html>
